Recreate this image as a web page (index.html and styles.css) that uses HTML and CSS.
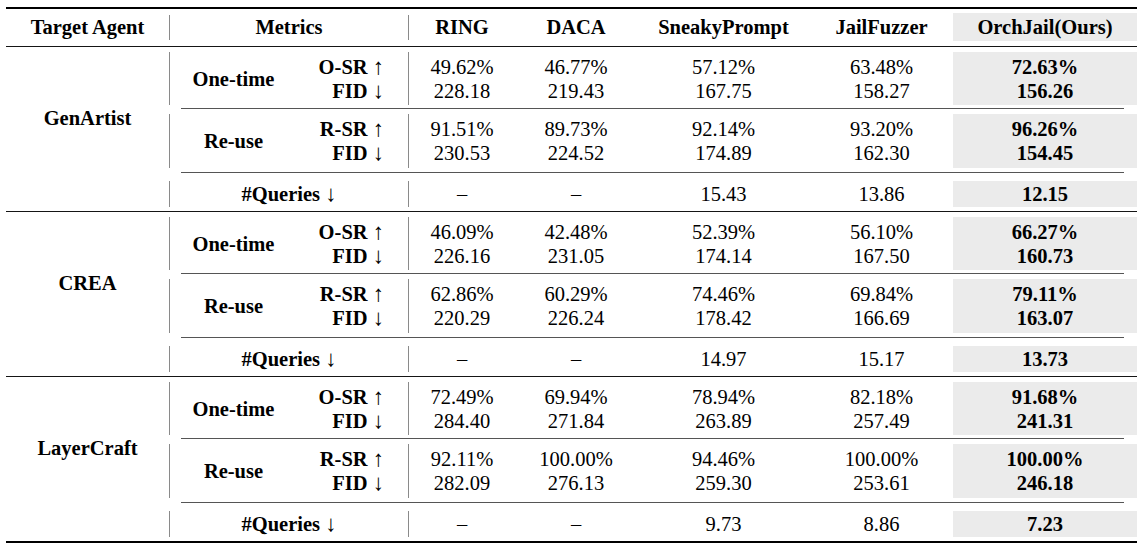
FILE: index.html
```html
<!DOCTYPE html>
<html lang="en">
<head>
<meta charset="utf-8">
<title>Results table</title>
<link rel="stylesheet" href="styles.css">
</head>
<body>
<div class="table">
  <div class="toprule"></div>
  <div class="head">
    <div>Target Agent</div>
    <div class="bar"></div>
    <div>Metrics</div>
    <div class="bar"></div>
    <div>RING</div>
    <div>DACA</div>
    <div>SneakyPrompt</div>
    <div>JailFuzzer</div>
    <div class="ours">OrchJail(Ours)</div>
  </div>
  <div class="midrule"></div>

  <div class="group">
    <div class="agent">GenArtist</div>
    <div class="right">
      <div class="blk b1">
        <div class="bar"></div>
        <div class="cell bold">One-time</div>
        <div class="cell bold mb"><span>O-SR <span class="ar">↑</span></span><span>FID <span class="ar">↓</span></span></div>
        <div class="bar"></div>
        <div class="cell"><span>49.62%</span><span>228.18</span></div>
        <div class="cell"><span>46.77%</span><span>219.43</span></div>
        <div class="cell"><span>57.12%</span><span>167.75</span></div>
        <div class="cell"><span>63.48%</span><span>158.27</span></div>
        <div class="cell ours bold"><span>72.63%</span><span>156.26</span></div>
      </div>
      <div class="cmid"></div>
      <div class="blk b2">
        <div class="bar"></div>
        <div class="cell bold">Re-use</div>
        <div class="cell bold mb"><span>R-SR <span class="ar">↑</span></span><span>FID <span class="ar">↓</span></span></div>
        <div class="bar"></div>
        <div class="cell"><span>91.51%</span><span>230.53</span></div>
        <div class="cell"><span>89.73%</span><span>224.52</span></div>
        <div class="cell"><span>92.14%</span><span>174.89</span></div>
        <div class="cell"><span>93.20%</span><span>162.30</span></div>
        <div class="cell ours bold"><span>96.26%</span><span>154.45</span></div>
      </div>
      <div class="cmid c2"></div>
      <div class="blk q">
        <div class="bar"></div>
        <div class="qcell bold qlabel">#Queries <span class="ar">↓</span></div>
        <div class="bar"></div>
        <div class="qcell">–</div>
        <div class="qcell">–</div>
        <div class="qcell">15.43</div>
        <div class="qcell">13.86</div>
        <div class="qcell ours bold">12.15</div>
      </div>
    </div>
  </div>
  <div class="midrule"></div>

  <div class="group">
    <div class="agent">CREA</div>
    <div class="right">
      <div class="blk b1">
        <div class="bar"></div>
        <div class="cell bold">One-time</div>
        <div class="cell bold mb"><span>O-SR <span class="ar">↑</span></span><span>FID <span class="ar">↓</span></span></div>
        <div class="bar"></div>
        <div class="cell"><span>46.09%</span><span>226.16</span></div>
        <div class="cell"><span>42.48%</span><span>231.05</span></div>
        <div class="cell"><span>52.39%</span><span>174.14</span></div>
        <div class="cell"><span>56.10%</span><span>167.50</span></div>
        <div class="cell ours bold"><span>66.27%</span><span>160.73</span></div>
      </div>
      <div class="cmid"></div>
      <div class="blk b2">
        <div class="bar"></div>
        <div class="cell bold">Re-use</div>
        <div class="cell bold mb"><span>R-SR <span class="ar">↑</span></span><span>FID <span class="ar">↓</span></span></div>
        <div class="bar"></div>
        <div class="cell"><span>62.86%</span><span>220.29</span></div>
        <div class="cell"><span>60.29%</span><span>226.24</span></div>
        <div class="cell"><span>74.46%</span><span>178.42</span></div>
        <div class="cell"><span>69.84%</span><span>166.69</span></div>
        <div class="cell ours bold"><span>79.11%</span><span>163.07</span></div>
      </div>
      <div class="cmid c2"></div>
      <div class="blk q">
        <div class="bar"></div>
        <div class="qcell bold qlabel">#Queries <span class="ar">↓</span></div>
        <div class="bar"></div>
        <div class="qcell">–</div>
        <div class="qcell">–</div>
        <div class="qcell">14.97</div>
        <div class="qcell">15.17</div>
        <div class="qcell ours bold">13.73</div>
      </div>
    </div>
  </div>
  <div class="midrule"></div>

  <div class="group">
    <div class="agent">LayerCraft</div>
    <div class="right">
      <div class="blk b1">
        <div class="bar"></div>
        <div class="cell bold">One-time</div>
        <div class="cell bold mb"><span>O-SR <span class="ar">↑</span></span><span>FID <span class="ar">↓</span></span></div>
        <div class="bar"></div>
        <div class="cell"><span>72.49%</span><span>284.40</span></div>
        <div class="cell"><span>69.94%</span><span>271.84</span></div>
        <div class="cell"><span>78.94%</span><span>263.89</span></div>
        <div class="cell"><span>82.18%</span><span>257.49</span></div>
        <div class="cell ours bold"><span>91.68%</span><span>241.31</span></div>
      </div>
      <div class="cmid"></div>
      <div class="blk b2">
        <div class="bar"></div>
        <div class="cell bold">Re-use</div>
        <div class="cell bold mb"><span>R-SR <span class="ar">↑</span></span><span>FID <span class="ar">↓</span></span></div>
        <div class="bar"></div>
        <div class="cell"><span>92.11%</span><span>282.09</span></div>
        <div class="cell"><span>100.00%</span><span>276.13</span></div>
        <div class="cell"><span>94.46%</span><span>259.30</span></div>
        <div class="cell"><span>100.00%</span><span>253.61</span></div>
        <div class="cell ours bold"><span>100.00%</span><span>246.18</span></div>
      </div>
      <div class="cmid c2"></div>
      <div class="blk q">
        <div class="bar"></div>
        <div class="qcell bold qlabel">#Queries <span class="ar">↓</span></div>
        <div class="bar"></div>
        <div class="qcell">–</div>
        <div class="qcell">–</div>
        <div class="qcell">9.73</div>
        <div class="qcell">8.86</div>
        <div class="qcell ours bold">7.23</div>
      </div>
    </div>
  </div>
  <div class="bottomrule"></div>
</div>
</body>
</html>
```

FILE: styles.css
```css
body {
  margin: 0;
  background: #ffffff;
  color: #000000;
  font-family: "Liberation Serif", "Times New Roman", serif;
  font-size: 20.5px;
}

.table {
  width: 1131px;
  margin: 7px 0 0 6px;
}

.toprule,
.bottomrule {
  height: 2px;
  background: #000000;
}

.midrule {
  height: 1px;
  background: #151515;
}

.head {
  display: grid;
  grid-template-columns: 163px 1px 238px 1px 106px 122px 173px 143px 184px;
  height: 28px;
  margin: 4px 0 5px;
  line-height: 28px;
  font-weight: bold;
  text-align: center;
}

.head .bar {
  margin: 2px 0 1px;
}

.bar {
  background: #8a8a8a;
}

.ours {
  background: #ebebeb;
}

.group {
  display: grid;
  grid-template-columns: 163px 968px;
}

.agent {
  display: flex;
  align-items: center;
  justify-content: center;
  padding-bottom: 21px;
  font-weight: bold;
}

.right {
  display: flex;
  flex-direction: column;
  padding: 5px 0 4px;
}

.blk {
  display: grid;
  grid-template-columns: 1px 127px 111px 1px 106px 122px 173px 143px 184px;
  line-height: 24px;
  text-align: center;
}

.b1 {
  height: 53px;
}

.b2 {
  height: 54px;
}

.q {
  height: 26px;
  line-height: 26px;
}

.cell {
  display: flex;
  flex-direction: column;
  justify-content: center;
  align-items: center;
  white-space: nowrap;
}

.cell.mb {
  align-items: flex-end;
  padding-right: 24px;
}

.qcell {
  text-align: center;
  white-space: nowrap;
}

.qlabel {
  grid-column: span 2;
}

.bold {
  font-weight: bold;
}

.ar {
  font-weight: normal;
  font-size: 1.1em;
}

.cmid {
  height: 1px;
  background: #555555;
  margin: 3px 13px 5px 12px;
}

.cmid.c2 {
  margin: 4px 13px 8px 12px;
}
```
